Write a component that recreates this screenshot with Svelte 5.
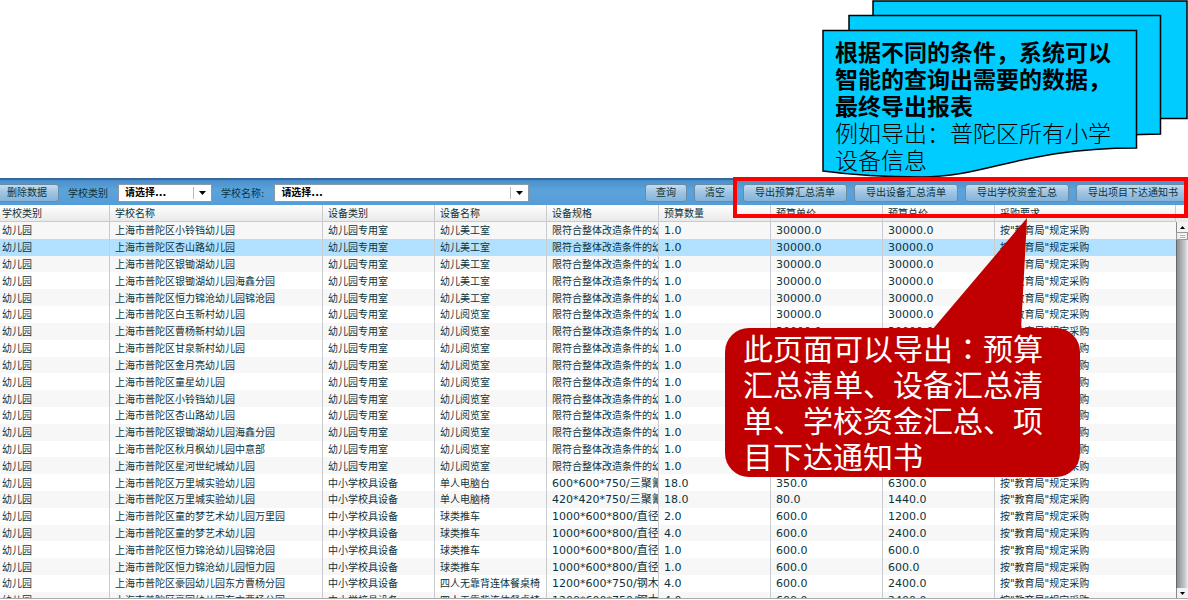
<script>
	const columns = [
		{ title: '学校类别', width: 110 },
		{ title: '学校名称', width: 213 },
		{ title: '设备类别', width: 112 },
		{ title: '设备名称', width: 112 },
		{ title: '设备规格', width: 112 },
		{ title: '预算数量', width: 112 },
		{ title: '预算单价', width: 112 },
		{ title: '预算总价', width: 112 },
		{ title: '采购要求', width: 0 }
	];

	const room = '幼儿园专用室';
	const school = '中小学校具设备';
	const whole = '限符合整体改造条件的幼儿园';

	// name, category, device, spec, amount, price, total
	const items = [
		['小铃铛幼儿园', room, '幼儿美工室', whole, '1.0', '30000.0', '30000.0'],
		['杏山路幼儿园', room, '幼儿美工室', whole, '1.0', '30000.0', '30000.0'],
		['银锄湖幼儿园', room, '幼儿美工室', whole, '1.0', '30000.0', '30000.0'],
		['银锄湖幼儿园海鑫分园', room, '幼儿美工室', whole, '1.0', '30000.0', '30000.0'],
		['恒力锦沧幼儿园锦沧园', room, '幼儿美工室', whole, '1.0', '30000.0', '30000.0'],
		['白玉新村幼儿园', room, '幼儿阅览室', whole, '1.0', '30000.0', '30000.0'],
		['曹杨新村幼儿园', room, '幼儿阅览室', whole, '1.0', '30000.0', '30000.0'],
		['甘泉新村幼儿园', room, '幼儿阅览室', whole, '1.0', '30000.0', '30000.0'],
		['金月亮幼儿园', room, '幼儿阅览室', whole, '1.0', '30000.0', '30000.0'],
		['童星幼儿园', room, '幼儿阅览室', whole, '1.0', '30000.0', '30000.0'],
		['小铃铛幼儿园', room, '幼儿阅览室', whole, '1.0', '30000.0', '30000.0'],
		['杏山路幼儿园', room, '幼儿阅览室', whole, '1.0', '30000.0', '30000.0'],
		['银锄湖幼儿园海鑫分园', room, '幼儿阅览室', whole, '1.0', '30000.0', '30000.0'],
		['秋月枫幼儿园中意部', room, '幼儿阅览室', whole, '1.0', '30000.0', '30000.0'],
		['星河世纪城幼儿园', room, '幼儿阅览室', whole, '1.0', '30000.0', '30000.0'],
		['万里城实验幼儿园', school, '单人电脑台', '600*600*750/三聚氰胺', '18.0', '350.0', '6300.0'],
		['万里城实验幼儿园', school, '单人电脑椅', '420*420*750/三聚氰胺', '18.0', '80.0', '1440.0'],
		['童的梦艺术幼儿园万里园', school, '球类推车', '1000*600*800/直径', '2.0', '600.0', '1200.0'],
		['童的梦艺术幼儿园', school, '球类推车', '1000*600*800/直径', '4.0', '600.0', '2400.0'],
		['恒力锦沧幼儿园锦沧园', school, '球类推车', '1000*600*800/直径', '1.0', '600.0', '600.0'],
		['恒力锦沧幼儿园恒力园', school, '球类推车', '1000*600*800/直径', '1.0', '600.0', '600.0'],
		['豪园幼儿园东方曹杨分园', school, '四人无靠背连体餐桌椅', '1200*600*750/钢木', '4.0', '600.0', '2400.0'],
		['豪园幼儿园东方曹杨分园', school, '四人无靠背连体餐桌椅', '1200*600*750/钢木', '4.0', '600.0', '2400.0']
	];

	const exports = ['导出预算汇总清单', '导出设备汇总清单', '导出学校资金汇总', '导出项目下达通知书'];

	let selected = 1;
	let category = '';
	let schoolName = '';
</script>

<main>
	<header>
		<div class="note">
			<svg width="366" height="178" viewBox="0 0 366 178" aria-hidden="true">
				<path d="M51 1H365V118.500H51Z" />
				<path d="M27 15.500H338.500V134L300 135H27Z" />
				<path d="M1 30.500H314.500V148C200 148 165 177 100 177C62 177 30 175 1 171Z" />
			</svg>
			<p class="strong">根据不同的条件，系统可以<br />智能的查询出需要的数据，<br />最终导出报表</p>
			<p>例如导出：普陀区所有小学<br />设备信息</p>
		</div>
	</header>

	<section class="panel">
		<div class="toolbar">
			<button type="button" class="remove">删除数据</button>
			<label for="category">学校类别</label>
			<span class="combo">
				<select id="category" bind:value={category}>
					<option value="">请选择...</option>
				</select>
				<svg width="7" height="4" viewBox="0 0 7 4"><path d="M0 0H7L3.500 4Z" /></svg>
			</span>
			<label for="school">学校名称:</label>
			<span class="combo wide">
				<select id="school" bind:value={schoolName}>
					<option value="">请选择...</option>
				</select>
				<svg width="7" height="4" viewBox="0 0 7 4"><path d="M0 0H7L3.500 4Z" /></svg>
			</span>
			<div class="actions">
				<button type="button" class="small">查询</button>
				<button type="button" class="small">清空</button>
				{#each exports as text}
					<button type="button">{text}</button>
				{/each}
			</div>
		</div>

		<div class="grid">
			<div class="rows">
				<table>
					<colgroup>
						{#each columns as col}
							<col style={col.width ? `width: ${col.width}px` : ''} />
						{/each}
					</colgroup>
					<thead>
						<tr>
							{#each columns as col}
								<th>{col.title}</th>
							{/each}
						</tr>
					</thead>
					<tbody>
						{#each items as item, i}
							<tr class:selected={i === selected} on:click={() => (selected = i)}>
								<td>幼儿园</td>
								<td>上海市普陀区{item[0]}</td>
								<td>{item[1]}</td>
								<td>{item[2]}</td>
								<td class:num={item[3] !== whole}>{item[3]}</td>
								<td class="num">{item[4]}</td>
								<td class="num">{item[5]}</td>
								<td class="num">{item[6]}</td>
								<td>按"教育局"规定采购</td>
							</tr>
						{/each}
					</tbody>
				</table>
			</div>
			<div class="scroll" aria-hidden="true">
				<div class="cap"></div>
				<div class="arrow"><svg width="5" height="3" viewBox="0 0 5 3"><path d="M0 3H5L2.500 0Z" /></svg></div>
				<div class="thumb"></div>
				<div class="track"></div>
				<div class="arrow"><svg width="5" height="3" viewBox="0 0 5 3"><path d="M0 0H5L2.500 3Z" /></svg></div>
			</div>
		</div>

		<div class="frame"></div>
		<div class="callout">
			<svg width="96" height="112" viewBox="0 0 96 112" aria-hidden="true"><path d="M95 0L0 112H89Z" /></svg>
			<p>
				此页面可以导出<span class="colon">：</span>预算<br />汇总清单、设备汇总清<br />单、学校资金汇总、项<br />目下达通知书
			</p>
		</div>
	</section>
</main>

<style>
	:global(body) {
		background: #fff;
	}
	main {
		display: flex;
		flex-direction: column;
		height: 100vh;
		overflow: hidden;
		font-family: 'DejaVu Sans', 'Noto Sans CJK SC', sans-serif;
		font-size: 10px;
		color: #0b333c;
	}
	p {
		margin: 0;
	}

	header {
		display: flex;
		justify-content: flex-end;
	}
	.note {
		position: relative;
		box-sizing: border-box;
		width: 366px;
		padding: 38px 0 5px 13px;
		color: #000;
		font-family: 'Noto Sans CJK SC', sans-serif;
		font-size: 23px;
		font-weight: 300;
		line-height: 27px;
		white-space: nowrap;
	}
	.note svg {
		position: absolute;
		top: 0;
		left: 0;
		fill: #0cf;
		stroke: #000;
		stroke-width: 1.5;
	}
	.note p {
		position: relative;
	}
	.note .strong {
		font-weight: 700;
	}

	.panel {
		position: relative;
		display: flex;
		flex: 1;
		flex-direction: column;
		min-height: 0;
		padding-bottom: 1px;
	}
	.toolbar {
		display: flex;
		align-items: center;
		box-sizing: border-box;
		height: 27px;
		border-top: 2px solid #35699d;
		background: linear-gradient(#4a8fcd, #5ba3da 40%, #569dd8);
		overflow: hidden;
		white-space: nowrap;
	}
	button {
		flex: none;
		box-sizing: border-box;
		height: 18px;
		padding: 0 11px;
		border: 1px solid #6b8ba5;
		border-radius: 3px;
		background: linear-gradient(#c3dcef, #9cc3e2 50%, #86b3d8);
		color: #0b333c;
		font: inherit;
		line-height: 16px;
	}
	.remove {
		margin-left: -5px;
	}
	.small {
		padding: 0 10px;
	}
	label {
		margin: 0 10px 0 9px;
	}
	.combo {
		position: relative;
		flex: none;
		width: 94px;
		height: 18px;
	}
	.combo.wide {
		width: 255px;
	}
	select {
		display: block;
		width: 100%;
		height: 100%;
		padding: 0 6px;
		border: 1px solid #8a9aa8;
		border-radius: 0;
		background: linear-gradient(#bbb, #bbb) right 17px center / 1px 12px no-repeat #fff;
		color: #000;
		font: inherit;
		font-weight: 700;
		appearance: none;
	}
	.combo svg {
		position: absolute;
		top: 7px;
		right: 6px;
		pointer-events: none;
	}
	.actions {
		display: flex;
		gap: 7px;
		margin-right: -2px;
		margin-left: auto;
	}

	.grid {
		display: flex;
		flex: 1;
		min-height: 0;
		border-bottom: 1px solid #aaa;
	}
	.rows {
		flex: 1;
		overflow: hidden;
	}
	/* the last row runs under the bottom edge */
	table {
		width: 100%;
		height: calc(100% + 11px);
		border-spacing: 0;
		table-layout: fixed;
	}
	th,
	td {
		height: 14px;
		padding: 2px 0 0 5px;
		border-right: 1px solid #c8cccf;
		font-weight: 400;
		line-height: 14px;
		text-align: left;
		white-space: nowrap;
		overflow: hidden;
	}
	th:first-child,
	td:first-child {
		padding-left: 2px;
	}
	td:last-child {
		border-right: 0;
	}
	th {
		box-sizing: border-box;
		height: 17px;
		border-bottom: 1px solid #c8cccf;
		background: linear-gradient(#fff, #e9e9e9);
	}
	tbody tr:nth-child(odd) {
		background: #f7f7f7;
	}
	tbody tr.selected {
		background: #b2e1ff;
	}
	.num {
		font-size: 11px;
	}

	.scroll {
		display: flex;
		flex-direction: column;
		width: 12px;
	}
	.cap {
		height: 17px;
		background: linear-gradient(#fff, #e9e9e9);
	}
	.arrow {
		display: flex;
		align-items: center;
		justify-content: center;
		height: 10px;
		border-left: 1px solid #888;
		background: #f3f3f3;
	}
	.thumb {
		box-sizing: border-box;
		height: 8px;
		border: 1px solid #999;
		background: repeating-linear-gradient(#fff 0 1px, #aaa 1px 2px) center / 5px 5px no-repeat #eee;
	}
	.track {
		flex: 1;
		border-left: 1px solid #666;
		background: linear-gradient(90deg, #8c8f92, #c5c8ca 70%, #eee);
	}

	.frame {
		position: absolute;
		top: -1px;
		right: 0;
		box-sizing: border-box;
		width: 455px;
		height: 41px;
		border: 4px solid #f00;
	}
	.callout {
		position: absolute;
		top: 150px;
		right: 108px;
		box-sizing: border-box;
		width: 355px;
		padding: 1px 0 4px 18px;
		border-radius: 24px;
		background: #c00000;
		color: #fff;
		font-family: 'Noto Sans CJK SC', sans-serif;
		font-size: 30px;
		font-weight: 400;
		line-height: 36px;
		white-space: nowrap;
	}
	.callout svg {
		position: absolute;
		top: -110px;
		left: 207px;
		fill: #c00000;
	}
	.colon {
		font-family: 'Noto Sans CJK TC', sans-serif;
	}
</style>
